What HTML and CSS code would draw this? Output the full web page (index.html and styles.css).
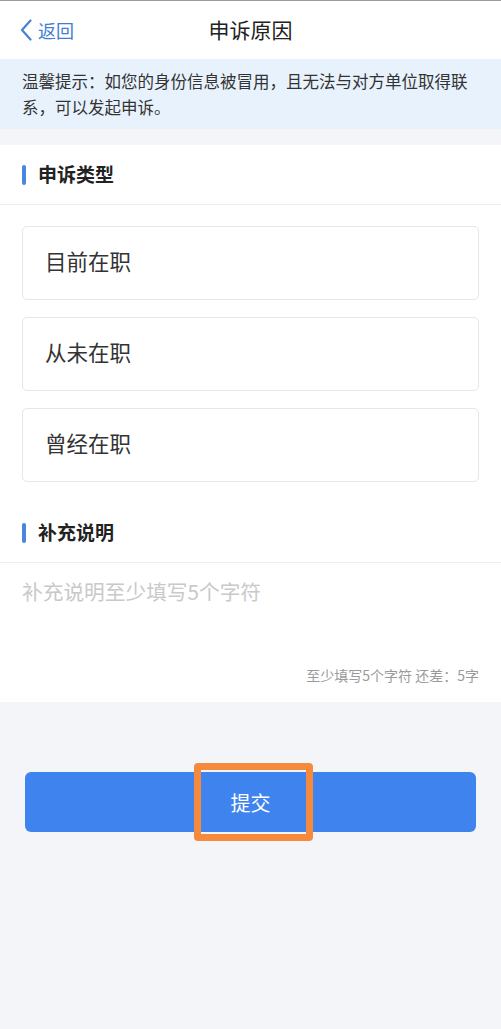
FILE: index.html
```html
<!DOCTYPE html>
<html lang="zh-CN">
<head>
<meta charset="utf-8">
<title>申诉原因</title>
<link rel="stylesheet" href="styles.css">
</head>
<body>
<div class="page">
  <header class="nav">
    <a class="back">
      <svg class="chev" width="12" height="22" viewBox="0 0 12 22"><path d="M10.5 1.5 L2 11 L10.5 20.5" fill="none" stroke="#4a80d2" stroke-width="2.2" stroke-linecap="round" stroke-linejoin="round"/></svg>
      <span>返回</span>
    </a>
    <h1 class="title">申诉原因</h1>
    <span class="spacer"></span>
  </header>
  <div class="tip">温馨提示：如您的身份信息被冒用，且无法与对方单位取得联系，可以发起申诉。</div>

  <section class="panel">
    <div class="sec-head"><i class="bar"></i><span>申诉类型</span></div>
    <div class="options">
      <div class="option">目前在职</div>
      <div class="option">从未在职</div>
      <div class="option">曾经在职</div>
    </div>
    <div class="sec-head"><i class="bar"></i><span>补充说明</span></div>
    <div class="remark">
      <div class="placeholder">补充说明至少填写5个字符</div>
      <div class="counter">至少填写5个字符 还差：5字</div>
    </div>
  </section>

  <div class="actions">
    <button class="submit">提交<span class="highlight"></span></button>
  </div>
</div>
</body>
</html>
```

FILE: styles.css
```css
* { box-sizing: border-box; }
html, body { margin: 0; padding: 0; }
body {
  background: #f4f5f9;
  font-family: "Noto Sans CJK SC", "Noto Sans", sans-serif;
  color: #333;
  min-height: 1029px;
}
.page { border-top: 1px solid #9a9a9a; }
.nav {
  height: 58px;
  background: #fff;
  display: grid;
  grid-template-columns: 1fr auto 1fr;
  align-items: center;
  padding: 0 20px;
}
.back {
  display: flex;
  align-items: center;
  gap: 6px;
  color: #3f7dd6;
  font-size: 18px;
}
.chev { display: block; }
.title {
  margin: 0;
  font-size: 21px;
  font-weight: 400;
  color: #222;
  line-height: 28px;
  margin-top: -2px;
}
.tip {
  background: #e8f2fd;
  padding: 9px 22px 9px 22px;
  font-size: 16.5px;
  line-height: 26px;
  color: #333;
}
.panel {
  margin-top: 16px;
  background: #fff;
}
.sec-head {
  height: 60px;
  display: flex;
  align-items: center;
  padding-left: 22px;
  border-bottom: 1px solid #ececec;
  font-size: 19px;
  font-weight: 700;
  color: #222;
}
.sec-head span { margin-top: -2px; }
.sec-head .bar {
  width: 4px;
  height: 20px;
  border-radius: 2px;
  background: #4a86e0;
  margin-right: 12px;
}
.options {
  padding: 21px 22px 21px 22px;
  display: flex;
  flex-direction: column;
  gap: 17px;
}
.option {
  height: 74px;
  border: 1px solid #e6e6e6;
  border-radius: 5px;
  display: flex;
  align-items: center;
  padding-left: 22px;
  padding-bottom: 5px;
  font-size: 21.5px;
  color: #333;
}
.remark {
  padding: 14px 22px 18px 22px;
}
.placeholder {
  font-size: 20.7px;
  line-height: 28px;
  color: #c9c9c9;
  height: 89px;
}
.counter {
  text-align: right;
  font-size: 14px;
  line-height: 18px;
  color: #9a9a9a;
}
.actions {
  padding: 70px 25px 0 25px;
}
.submit {
  position: relative;
  display: block;
  width: 100%;
  height: 60px;
  border: 0;
  border-radius: 6px;
  background: #3f84ee;
  color: #fff;
  font-family: inherit;
  font-size: 20px;
}
.highlight {
  position: absolute;
  left: 169px;
  top: -9px;
  width: 119px;
  height: 78px;
  border: 7px solid #f58a3c;
  border-radius: 4px;
}
```
